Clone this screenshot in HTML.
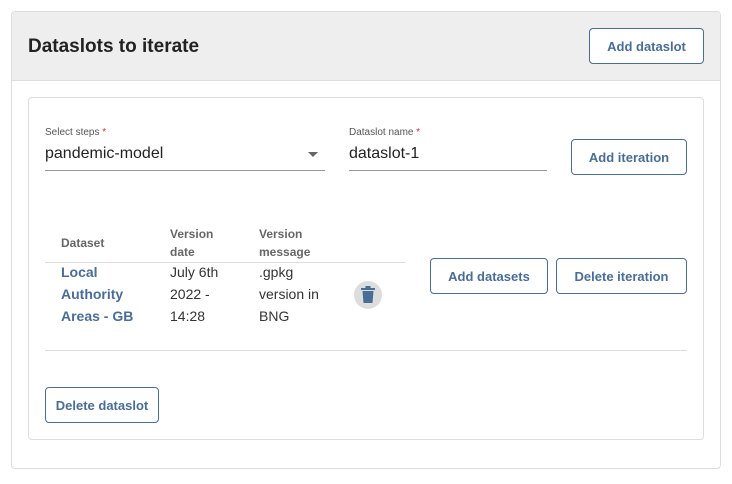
<!DOCTYPE html><html><head><style>
body{margin:0;width:732px;height:484px;background:#fff;font-family:"Liberation Sans",sans-serif;position:relative;overflow:hidden}
.a{position:absolute}
.btn{position:absolute;box-sizing:border-box;border:1px solid #4a6d96;border-radius:4px;color:#4a6d96;font-size:13px;font-weight:bold;display:flex;align-items:center;justify-content:center;background:#fff}
.t{position:absolute;font-size:14px;line-height:22px;color:#333}
.h{position:absolute;font-size:12px;line-height:18px;color:#666;font-weight:bold}
.l{color:#4a6d96;font-weight:bold}
</style></head><body>
<div class="a" style="left:11px;top:11px;width:708px;height:456px;border:1px solid #ddd;border-radius:4px"></div>
<div class="a" style="left:12px;top:12px;width:708px;height:68px;background:#eeeeee;border-bottom:1px solid #ddd;border-radius:4px 4px 0 0"></div>
<div class="a" style="left:28px;top:36px;font-size:19px;font-weight:bold;color:#222">Dataslots to iterate</div>
<div class="btn" style="left:589px;top:28px;width:115px;height:36px">Add dataslot</div>
<div class="a" style="left:28px;top:97px;width:674px;height:341px;border:1px solid #ddd;border-radius:4px"></div>
<div class="a" style="left:45px;top:127px;font-size:10px;color:#555">Select steps <span style="color:#d33">*</span></div>
<div class="a" style="left:45px;top:145px;font-size:16px;color:#222">pandemic-model</div>
<div class="a" style="left:308px;top:152px;width:0;height:0;border-left:5px solid transparent;border-right:5px solid transparent;border-top:5px solid #666"></div>
<div class="a" style="left:45px;top:170px;width:280px;height:1px;background:#999"></div>
<div class="a" style="left:349px;top:127px;font-size:10px;color:#555">Dataslot name <span style="color:#d33">*</span></div>
<div class="a" style="left:349px;top:145px;font-size:16px;color:#222">dataslot-1</div>
<div class="a" style="left:349px;top:170px;width:198px;height:1px;background:#999"></div>
<div class="btn" style="left:571px;top:139px;width:116px;height:36px">Add iteration</div>
<div class="h" style="left:61px;top:234px">Dataset</div>
<div class="h" style="left:170px;top:225px">Version<br>date</div>
<div class="h" style="left:259px;top:225px">Version<br>message</div>
<div class="a" style="left:45px;top:262px;width:361px;height:1px;background:#ddd"></div>
<div class="t l" style="left:61px;top:261px">Local<br>Authority<br>Areas - GB</div>
<div class="t" style="left:170px;top:261px">July 6th<br>2022 -<br>14:28</div>
<div class="t" style="left:259px;top:261px">.gpkg<br>version in<br>BNG</div>
<div class="a" style="left:354px;top:281px;width:28px;height:28px;border-radius:50%;background:#ddd"></div>
<svg class="a" style="left:361px;top:286px" width="14" height="18" viewBox="0 0 14 18"><rect x="0" y="2" width="14" height="2" fill="#4a6d96"/><rect x="4.5" y="0" width="5" height="2" fill="#4a6d96"/><path d="M1.5 5h11l-1 12h-9z" fill="#4a6d96"/></svg>
<div class="btn" style="left:430px;top:258px;width:118px;height:36px">Add datasets</div>
<div class="btn" style="left:556px;top:258px;width:131px;height:36px">Delete iteration</div>
<div class="a" style="left:45px;top:350px;width:642px;height:1px;background:#ddd"></div>
<div class="btn" style="left:45px;top:387px;width:114px;height:36px">Delete dataslot</div>
</body></html>
